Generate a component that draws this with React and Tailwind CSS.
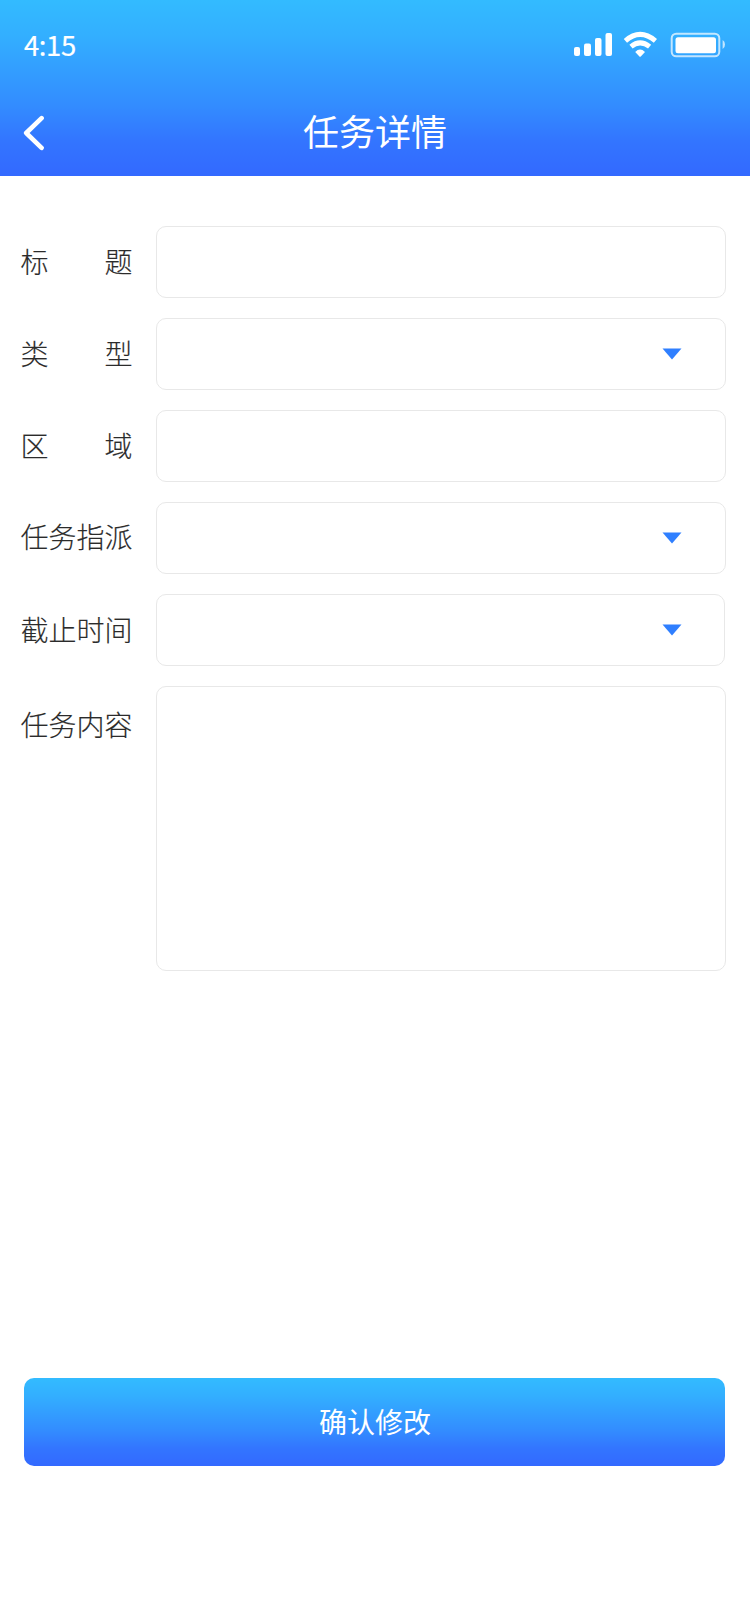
const labelCls = "w-[112px] shrink-0 whitespace-nowrap text-[28px] leading-[42px] font-light text-[#2b2b2b] [-webkit-text-stroke:0.15px_#2b2b2b]";

function Row({ label, arrow, last, width = "w-[570px]", labelPad = "pb-[2px]" }) {
  return (
    <div className={last ? "flex h-[285px] items-start pl-[20.5px]" : "flex h-[72px] items-center pl-[20.5px]"}>
      <div className={labelCls + " " + labelPad}>
        <div className="flex justify-between">
          {label.length === 2 ? label.split("").map((c) => <span key={c}>{c}</span>) : label}
        </div>
      </div>
      <div className={"ml-[23.5px] flex h-full items-center rounded-[10px] border border-[#e8e8e8] pl-[505px] " + width}>
        {arrow && (
          <svg className="shrink-0" width="20" height="12" viewBox="0 0 20 12">
            <path d="M0.5 0.5h19L10 11.5z" fill="#2f7fff" />
          </svg>
        )}
      </div>
    </div>
  );
}

export default function App() {
  return (
    <div className="flex h-[1624px] w-[750px] flex-col bg-white font-['Noto_Sans_CJK_SC',sans-serif]">
      <header className="h-[176px] bg-[linear-gradient(180deg,#33bbff_0%,#33afff_20%,#338cff_60%,#3375ff_80%,#3369ff_100%)] text-white">
        <div className="flex h-[88px] items-center justify-between pl-[24px] pr-[25px]">
          <span className="pb-[1px] text-[27.5px] leading-[40px] tracking-[-0.4px] [-webkit-text-stroke:0.2px_#fff]">4:15</span>
          <svg width="152" height="30" viewBox="573 29 152 30" fill="#fff">
            <rect x="574" y="47" width="6" height="9" rx="2" />
            <rect x="584" y="43.5" width="7" height="12.5" rx="2" />
            <rect x="595" y="38" width="6.5" height="18" rx="2" />
            <rect x="605.5" y="33" width="6.5" height="23" rx="2" />
            <g fill="none" stroke="#fff" strokeWidth="5">
              <path d="M625.4 40.8Q640 28 655.4 40.8" />
              <path d="M631 46.6Q640 39 649.6 46.6" />
            </g>
            <path d="M635.2 52Q640 47.2 645 52L641 56.2Q640 57.2 639.2 56.2Z" />
            <rect x="671.7" y="33.7" width="47.6" height="22.6" rx="4.5" fill="none" stroke="#fff" strokeWidth="2" opacity=".7" />
            <rect x="675.5" y="37.2" width="40.5" height="16" rx="2.5" />
            <path d="M722.6 40Q725 41 725 44.5T722.6 49Z" opacity=".7" />
          </svg>
        </div>
        <div className="flex h-[88px] items-center pb-[2px]">
          <svg className="ml-[23px] mt-[4px]" width="23" height="36" viewBox="23 115 23 36" fill="none" stroke="#fff" strokeWidth="4.6" strokeLinecap="round" strokeLinejoin="round">
            <path d="M41.6 118.2L26.2 133L41.6 147.8" />
          </svg>
          <h1 className="mr-[46px] flex-1 pb-[2px] text-center text-[36px] font-normal leading-[54px]">任务详情</h1>
        </div>
      </header>
      <main className="mt-[50px] flex flex-col gap-[20px]">
        <Row label="标题" />
        <Row label="类型" arrow />
        <Row label="区域" />
        <Row label="任务指派" arrow labelPad="pb-[4px]" />
        <Row label="截止时间" arrow width="w-[569px]" />
        <Row label="任务内容" last labelPad="pt-[17px]" />
      </main>
      <button className="ml-[24px] mt-[407px] h-[88px] w-[701px] rounded-[10px] bg-[linear-gradient(180deg,#33bbff_0%,#33afff_20%,#338cff_60%,#3375ff_80%,#3369ff_100%)] pb-[2px] pl-[1px] text-[28px] text-white">确认修改</button>
    </div>
  );
}
